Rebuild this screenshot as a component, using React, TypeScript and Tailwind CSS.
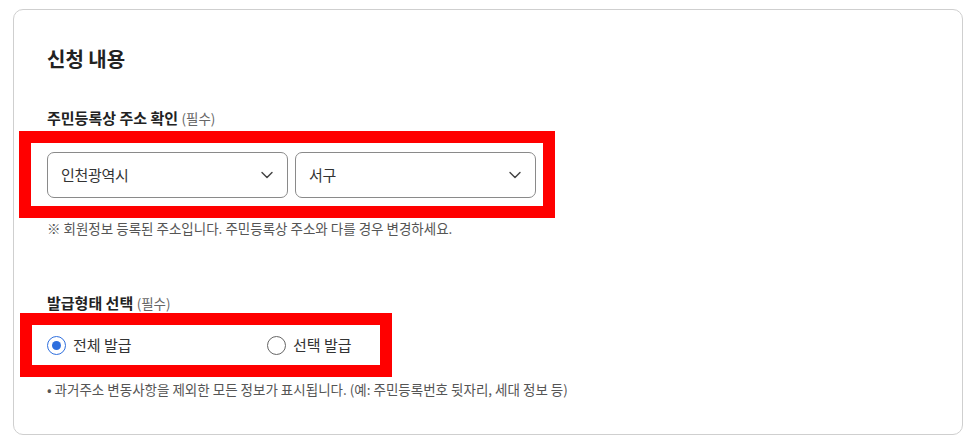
import { ChevronDown } from "lucide-react";

const font = "font-['Noto_Sans_CJK_KR','Noto_Sans',sans-serif]";

function Select({ value }: { value: string }) {
  return (
    <div className="flex h-[46px] w-[241px] items-center justify-between rounded-[7px] border border-[#8a8a8a] bg-white pl-[13px] pr-[10px]">
      <span className="text-[15px] leading-[20px] tracking-[-0.3px] text-[#333]">{value}</span>
      <ChevronDown size={20} strokeWidth={1.7} className="text-[#444]" />
    </div>
  );
}

function Radio({ label, checked }: { label: string; checked?: boolean }) {
  return (
    <label className={`flex shrink-0 items-center gap-[7px] ${checked ? "w-[220px]" : ""}`}>
      {checked ? (
        <span className="flex size-[19px] items-center justify-center rounded-full border-[1.5px] border-[#2f6fde]">
          <span className="size-[9px] rounded-full bg-[#2f6fde]" />
        </span>
      ) : (
        <span className="size-[19px] rounded-full border border-[#666]" />
      )}
      <span className="text-[15px] leading-[20px] text-[#333]">{label}</span>
    </label>
  );
}

export default function App() {
  return (
    <div className={`${font} min-h-[445px] bg-white pl-[13px] pt-[9px]`}>
      <section className="h-[426px] w-[950px] rounded-[10px] border border-[#cfcfcf] pl-[5px] pt-[35px]">
        <h2 className="pl-[28px] text-[20px] font-bold leading-[28px] text-[#222]">신청 내용</h2>

        <p className="mt-[35px] pl-[28px] text-[15px] font-bold leading-[20px] text-[#222]">
          주민등록상 주소 확인 <span className="text-[13.5px] font-normal text-[#666]">(필수)</span>
        </p>
        <div className="mt-[3px] w-[536px] border-[12px] border-[#ff0000] bg-white pb-[8px] pl-[16px] pt-[9px]">
          <div className="flex gap-[7px]">
            <Select value="인천광역시" />
            <Select value="서구" />
          </div>
        </div>
        <p className="pl-[28px] text-[13.5px] leading-[20px] text-[#555]">
          ※ 회원정보 등록된 주소입니다. 주민등록상 주소와 다를 경우 변경하세요.
        </p>

        <p className="mt-[55px] pl-[28px] text-[15px] font-bold leading-[20px] text-[#222]">
          발급형태 선택 <span className="text-[13.5px] font-normal text-[#666]">(필수)</span>
        </p>
        <div className="ml-[1px] flex h-[64px] w-[372px] items-center border-[12px] border-[#ff0000] bg-white pl-[15px]">
          <Radio label="전체 발급" checked />
          <Radio label="선택 발급" />
        </div>
        <p className="mt-[2px] pl-[28px] text-[13.5px] leading-[20px] text-[#555]">
          • 과거주소 변동사항을 제외한 모든 정보가 표시됩니다. (예: 주민등록번호 뒷자리, 세대 정보 등)
        </p>
      </section>
    </div>
  );
}
